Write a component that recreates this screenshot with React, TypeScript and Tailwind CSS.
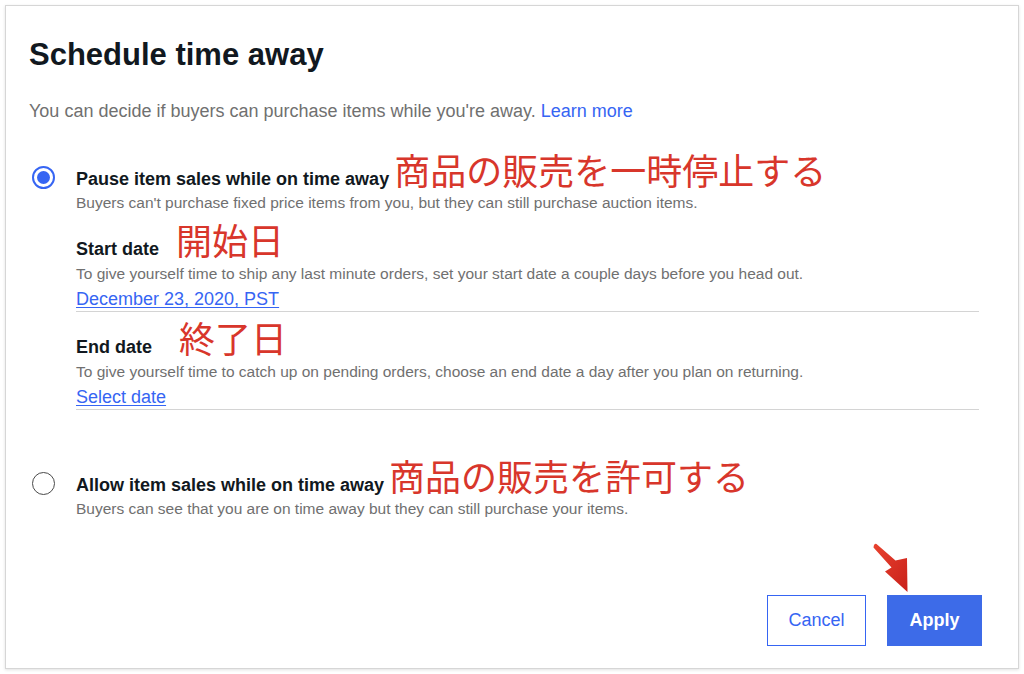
import React from "react";

const sans = { fontFamily: '"Liberation Sans", Arial, sans-serif' };

function Note({ children, className = "" }: { children: React.ReactNode; className?: string }) {
  // red hand-written annotation, kept out of the line box height
  return (
    <span
      className={`font-normal text-[36px] leading-[0] text-[#d8362b] ${className}`}
      style={{ fontFamily: '"Noto Sans CJK JP", "Noto Sans", sans-serif' }}
    >
      {children}
    </span>
  );
}

function Radio({ checked }: { checked: boolean }) {
  if (checked) {
    return (
      <div className="w-[23px] h-[23px] shrink-0 rounded-full border-2 border-[#3665f3] flex items-center justify-center">
        <div className="w-[13px] h-[13px] rounded-full bg-[#3665f3]" />
      </div>
    );
  }
  return <div className="w-[23px] h-[23px] shrink-0 rounded-full border-[1.5px] border-[#4a4a4a]" />;
}

function DateField({
  label,
  note,
  noteGap,
  hint,
  value,
  top,
}: {
  label: string;
  note: string;
  noteGap: string;
  hint: string;
  value: string;
  top: string;
}) {
  return (
    <div className={`${top} border-b border-[#d4d4d4] mr-[3px]`}>
      <p className="text-[18px] leading-[24px] font-bold text-[#111820]">
        {label}
        <Note className={noteGap}>{note}</Note>
      </p>
      <p className="mt-[3px] text-[15.5px] leading-[20px] text-[#707070]">{hint}</p>
      <a href="#" className="block w-fit mt-[3px] text-[18px] leading-[24px] text-[#3665f3] underline underline-offset-2">
        {value}
      </a>
    </div>
  );
}

function Arrow() {
  return (
    <svg className="absolute left-[864px] top-[536px]" width="56" height="60" viewBox="0 0 56 60">
      <defs>
        <linearGradient id="arrowRed" x1="0" y1="0" x2="1" y2="1">
          <stop offset="0" stopColor="#e8432f" />
          <stop offset="1" stopColor="#c9201a" />
        </linearGradient>
      </defs>
      <path
        d="M12.5 8 L31.5 24.5 L43 22 L43.5 56 L21 35.5 L27.5 31.5 L9.5 11.5 Q10 7 12.5 8 Z"
        fill="url(#arrowRed)"
      />
    </svg>
  );
}

export default function App() {
  return (
    <div className="relative w-[1024px] h-[674px] bg-white p-[5px]" style={sans}>
      <div className="h-[664px] border border-[#d6d6d6] shadow-[0_1px_3px_rgba(0,0,0,0.12)] flex flex-col pl-[23px] pr-[36px] pt-[31px] pb-[22px]">
        <h1 className="text-[31px] leading-[36px] font-bold text-[#111820]">Schedule time away</h1>
        <p className="mt-[26px] text-[18px] leading-[24px] text-[#707070]">
          You can decide if buyers can purchase items while you're away.{" "}
          <a href="#" className="text-[#3665f3]">Learn more</a>
        </p>

        <div className="mt-[44px] flex items-start gap-[21px] pl-[3px]">
          <div className="mt-[-1px]">
            <Radio checked />
          </div>
          <div className="flex-1">
            <p className="text-[18px] leading-[24px] font-bold text-[#111820]">
              Pause item sales while on time away <Note>商品の販売を一時停止する</Note>
            </p>
            <p className="mt-[2px] text-[15.5px] leading-[20px] text-[#707070]">
              Buyers can't purchase fixed price items from you, but they can still purchase auction items.
            </p>
            <DateField
              top="mt-[24px]"
              label="Start date"
              note="開始日"
              noteGap="ml-[17px]"
              hint="To give yourself time to ship any last minute orders, set your start date a couple days before you head out."
              value="December 23, 2020, PST"
            />
            <DateField
              top="mt-[23px]"
              label="End date"
              note="終了日"
              noteGap="ml-[27px]"
              hint="To give yourself time to catch up on pending orders, choose an end date a day after you plan on returning."
              value="Select date"
            />
          </div>
        </div>

        <div className="mt-[63px] flex items-start gap-[21px] pl-[3px]">
          <div className="mt-[-1px]">
            <Radio checked={false} />
          </div>
          <div className="flex-1">
            <p className="text-[18px] leading-[24px] font-bold text-[#111820]">
              Allow item sales while on time away <Note>商品の販売を許可する</Note>
            </p>
            <p className="mt-[2px] text-[15.5px] leading-[20px] text-[#707070]">
              Buyers can see that you are on time away but they can still purchase your items.
            </p>
          </div>
        </div>

        <div className="mt-auto flex justify-end gap-[21px]">
          <button className="w-[99px] h-[51px] border border-[#3665f3] bg-white text-[18px] text-[#3665f3] flex items-center justify-center">
            Cancel
          </button>
          <button className="w-[95px] h-[51px] bg-[#3d6be8] text-[18px] font-bold text-white flex items-center justify-center">
            Apply
          </button>
        </div>
      </div>
      <Arrow />
    </div>
  );
}
